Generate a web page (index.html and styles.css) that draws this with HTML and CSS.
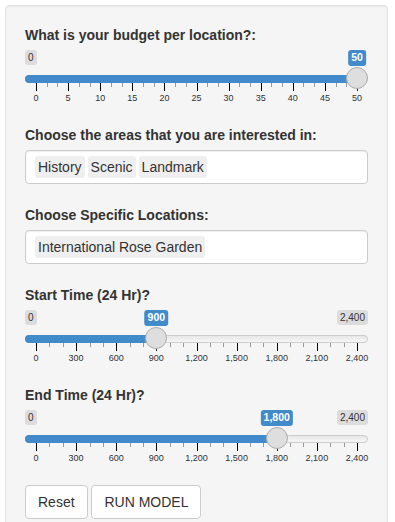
FILE: index.html
```html
<!DOCTYPE html>
<html>
<head>
<meta charset="utf-8">
<link rel="stylesheet" href="styles.css">
</head>
<body>
<div class="well">
  <div class="form-group">
    <label class="control-label">What is your budget per location?:</label>
    <div class="irs" style="--p:1">
      <span class="irs-line"></span>
      <span class="irs-bar"></span>
      <span class="irs-min">0</span>
      <span class="irs-single">50</span>
      <span class="irs-grid">
        <span class="pol" style="left:0%"></span><span class="txt" style="left:0%">0</span>
        <span class="pol small" style="left:3.333%"></span><span class="pol small" style="left:6.667%"></span>
        <span class="pol" style="left:10%"></span><span class="txt" style="left:10%">5</span>
        <span class="pol small" style="left:13.333%"></span><span class="pol small" style="left:16.667%"></span>
        <span class="pol" style="left:20%"></span><span class="txt" style="left:20%">10</span>
        <span class="pol small" style="left:23.333%"></span><span class="pol small" style="left:26.667%"></span>
        <span class="pol" style="left:30%"></span><span class="txt" style="left:30%">15</span>
        <span class="pol small" style="left:33.333%"></span><span class="pol small" style="left:36.667%"></span>
        <span class="pol" style="left:40%"></span><span class="txt" style="left:40%">20</span>
        <span class="pol small" style="left:43.333%"></span><span class="pol small" style="left:46.667%"></span>
        <span class="pol" style="left:50%"></span><span class="txt" style="left:50%">25</span>
        <span class="pol small" style="left:53.333%"></span><span class="pol small" style="left:56.667%"></span>
        <span class="pol" style="left:60%"></span><span class="txt" style="left:60%">30</span>
        <span class="pol small" style="left:63.333%"></span><span class="pol small" style="left:66.667%"></span>
        <span class="pol" style="left:70%"></span><span class="txt" style="left:70%">35</span>
        <span class="pol small" style="left:73.333%"></span><span class="pol small" style="left:76.667%"></span>
        <span class="pol" style="left:80%"></span><span class="txt" style="left:80%">40</span>
        <span class="pol small" style="left:83.333%"></span><span class="pol small" style="left:86.667%"></span>
        <span class="pol" style="left:90%"></span><span class="txt" style="left:90%">45</span>
        <span class="pol small" style="left:93.333%"></span><span class="pol small" style="left:96.667%"></span>
        <span class="pol" style="left:100%"></span><span class="txt" style="left:100%">50</span>
      </span>
      <span class="irs-handle"></span>
    </div>
  </div>

  <div class="form-group">
    <label class="control-label">Choose the areas that you are interested in:</label>
    <div class="selectize-control">
      <div class="selectize-input">
        <div class="item">History</div><div class="item">Scenic</div><div class="item">Landmark</div>
      </div>
    </div>
  </div>

  <div class="form-group">
    <label class="control-label">Choose Specific Locations:</label>
    <div class="selectize-control">
      <div class="selectize-input">
        <div class="item">International Rose Garden</div>
      </div>
    </div>
  </div>

  <div class="form-group">
    <label class="control-label">Start Time (24 Hr)?</label>
    <div class="irs" style="--p:0.375">
      <span class="irs-line"></span>
      <span class="irs-bar"></span>
      <span class="irs-min">0</span>
      <span class="irs-max">2,400</span>
      <span class="irs-single">900</span>
      <span class="irs-grid">
        <span class="pol" style="left:0%"></span><span class="txt" style="left:0%">0</span>
        <span class="pol small" style="left:4.167%"></span><span class="pol small" style="left:8.333%"></span>
        <span class="pol" style="left:12.5%"></span><span class="txt" style="left:12.5%">300</span>
        <span class="pol small" style="left:16.667%"></span><span class="pol small" style="left:20.833%"></span>
        <span class="pol" style="left:25%"></span><span class="txt" style="left:25%">600</span>
        <span class="pol small" style="left:29.167%"></span><span class="pol small" style="left:33.333%"></span>
        <span class="pol" style="left:37.5%"></span><span class="txt" style="left:37.5%">900</span>
        <span class="pol small" style="left:41.667%"></span><span class="pol small" style="left:45.833%"></span>
        <span class="pol" style="left:50%"></span><span class="txt" style="left:50%">1,200</span>
        <span class="pol small" style="left:54.167%"></span><span class="pol small" style="left:58.333%"></span>
        <span class="pol" style="left:62.5%"></span><span class="txt" style="left:62.5%">1,500</span>
        <span class="pol small" style="left:66.667%"></span><span class="pol small" style="left:70.833%"></span>
        <span class="pol" style="left:75%"></span><span class="txt" style="left:75%">1,800</span>
        <span class="pol small" style="left:79.167%"></span><span class="pol small" style="left:83.333%"></span>
        <span class="pol" style="left:87.5%"></span><span class="txt" style="left:87.5%">2,100</span>
        <span class="pol small" style="left:91.667%"></span><span class="pol small" style="left:95.833%"></span>
        <span class="pol" style="left:100%"></span><span class="txt" style="left:100%">2,400</span>
      </span>
      <span class="irs-handle"></span>
    </div>
  </div>

  <div class="form-group">
    <label class="control-label">End Time (24 Hr)?</label>
    <div class="irs" style="--p:0.75">
      <span class="irs-line"></span>
      <span class="irs-bar"></span>
      <span class="irs-min">0</span>
      <span class="irs-max">2,400</span>
      <span class="irs-single">1,800</span>
      <span class="irs-grid">
        <span class="pol" style="left:0%"></span><span class="txt" style="left:0%">0</span>
        <span class="pol small" style="left:4.167%"></span><span class="pol small" style="left:8.333%"></span>
        <span class="pol" style="left:12.5%"></span><span class="txt" style="left:12.5%">300</span>
        <span class="pol small" style="left:16.667%"></span><span class="pol small" style="left:20.833%"></span>
        <span class="pol" style="left:25%"></span><span class="txt" style="left:25%">600</span>
        <span class="pol small" style="left:29.167%"></span><span class="pol small" style="left:33.333%"></span>
        <span class="pol" style="left:37.5%"></span><span class="txt" style="left:37.5%">900</span>
        <span class="pol small" style="left:41.667%"></span><span class="pol small" style="left:45.833%"></span>
        <span class="pol" style="left:50%"></span><span class="txt" style="left:50%">1,200</span>
        <span class="pol small" style="left:54.167%"></span><span class="pol small" style="left:58.333%"></span>
        <span class="pol" style="left:62.5%"></span><span class="txt" style="left:62.5%">1,500</span>
        <span class="pol small" style="left:66.667%"></span><span class="pol small" style="left:70.833%"></span>
        <span class="pol" style="left:75%"></span><span class="txt" style="left:75%">1,800</span>
        <span class="pol small" style="left:79.167%"></span><span class="pol small" style="left:83.333%"></span>
        <span class="pol" style="left:87.5%"></span><span class="txt" style="left:87.5%">2,100</span>
        <span class="pol small" style="left:91.667%"></span><span class="pol small" style="left:95.833%"></span>
        <span class="pol" style="left:100%"></span><span class="txt" style="left:100%">2,400</span>
      </span>
      <span class="irs-handle"></span>
    </div>
  </div>

  <div class="buttons">
    <button class="btn">Reset</button>
    <button class="btn">RUN MODEL</button>
  </div>
</div>
</body>
</html>
```

FILE: styles.css
```css
* {
  box-sizing: border-box;
}

html, body {
  margin: 0;
  padding: 0;
  background: #fff;
}

body {
  font-family: "Liberation Sans", Arial, Helvetica, sans-serif;
  font-size: 14px;
  line-height: 1.42857143;
  color: #333;
}

.well {
  margin: 5px 0 0 5px;
  width: 383px;
  padding: 19px;
  background: #f5f5f5;
  border: 1px solid #e3e3e3;
  border-radius: 4px;
  box-shadow: inset 0 1px 1px rgba(0, 0, 0, 0.05);
}

.form-group {
  margin-bottom: 15px;
}

.control-label {
  display: block;
  font-weight: 700;
  margin-bottom: 5px;
}

/* ---- range slider ---- */
.irs {
  position: relative;
  display: block;
  height: 60px;
}

.irs-line {
  position: absolute;
  top: 25px;
  left: 0;
  right: 0;
  height: 8px;
  border: 1px solid #cccccc;
  border-radius: 8px;
  background: linear-gradient(to bottom, #dedede -50%, #ffffff 150%);
}

.irs-bar {
  position: absolute;
  top: 25px;
  left: 0;
  height: 8px;
  width: calc((100% - 22px) * var(--p) + 11px);
  background: #428bca;
  border-radius: 8px 0 0 8px;
}

.irs-min,
.irs-max {
  position: absolute;
  top: 0;
  padding: 1px 3px;
  font-size: 10px;
  line-height: 1.333;
  color: #333;
  background: rgba(0, 0, 0, 0.1);
  border-radius: 3px;
}

.irs-min {
  left: 0;
}

.irs-max {
  right: 0;
}

.irs-single {
  position: absolute;
  top: 0;
  left: calc((100% - 22px) * var(--p) + 11px);
  transform: translateX(-50%);
  padding: 1px 3px;
  font-size: 10.5px;
  line-height: 1.333;
  font-weight: 700;
  color: #fff;
  background: #428bca;
  border-radius: 3px;
  white-space: nowrap;
}

.irs-grid {
  position: absolute;
  top: 33px;
  left: 11px;
  right: 11px;
  height: 27px;
}

.pol {
  position: absolute;
  top: 0;
  width: 1px;
  height: 8px;
  background: #000;
}

.pol.small {
  height: 4px;
  background: #999;
}

.txt {
  position: absolute;
  top: 11px;
  font-size: 9px;
  line-height: 9px;
  color: #333;
  white-space: nowrap;
  transform: translateX(-50%);
}

.irs-handle {
  position: absolute;
  top: 17px;
  left: calc((100% - 22px) * var(--p));
  width: 22px;
  height: 22px;
  border: 1px solid #ababab;
  border-radius: 50%;
  background: #dedede;
  box-shadow: 1px 1px 3px rgba(255, 255, 255, 0.3);
}

/* ---- selectize ---- */
.selectize-control {
  padding-bottom: 6px;
}

.selectize-input {
  display: flex;
  flex-wrap: wrap;
  min-height: 34px;
  padding: 5px 9px 2px;
  background: #fff;
  border: 1px solid #cccccc;
  border-radius: 4px;
  box-shadow: inset 0 1px 1px rgba(0, 0, 0, 0.075);
}

.item {
  padding: 1px 3px;
  margin: 0 3px 3px 0;
  background: #efefef;
  color: #333;
  border-radius: 3px;
  line-height: 20px;
}

/* ---- buttons ---- */
.btn {
  display: inline-block;
  padding: 6px 12px;
  font-family: inherit;
  font-size: 14px;
  line-height: 1.42857143;
  color: #333;
  background: #fff;
  border: 1px solid #ccc;
  border-radius: 4px;
  margin: 0;
}
```
